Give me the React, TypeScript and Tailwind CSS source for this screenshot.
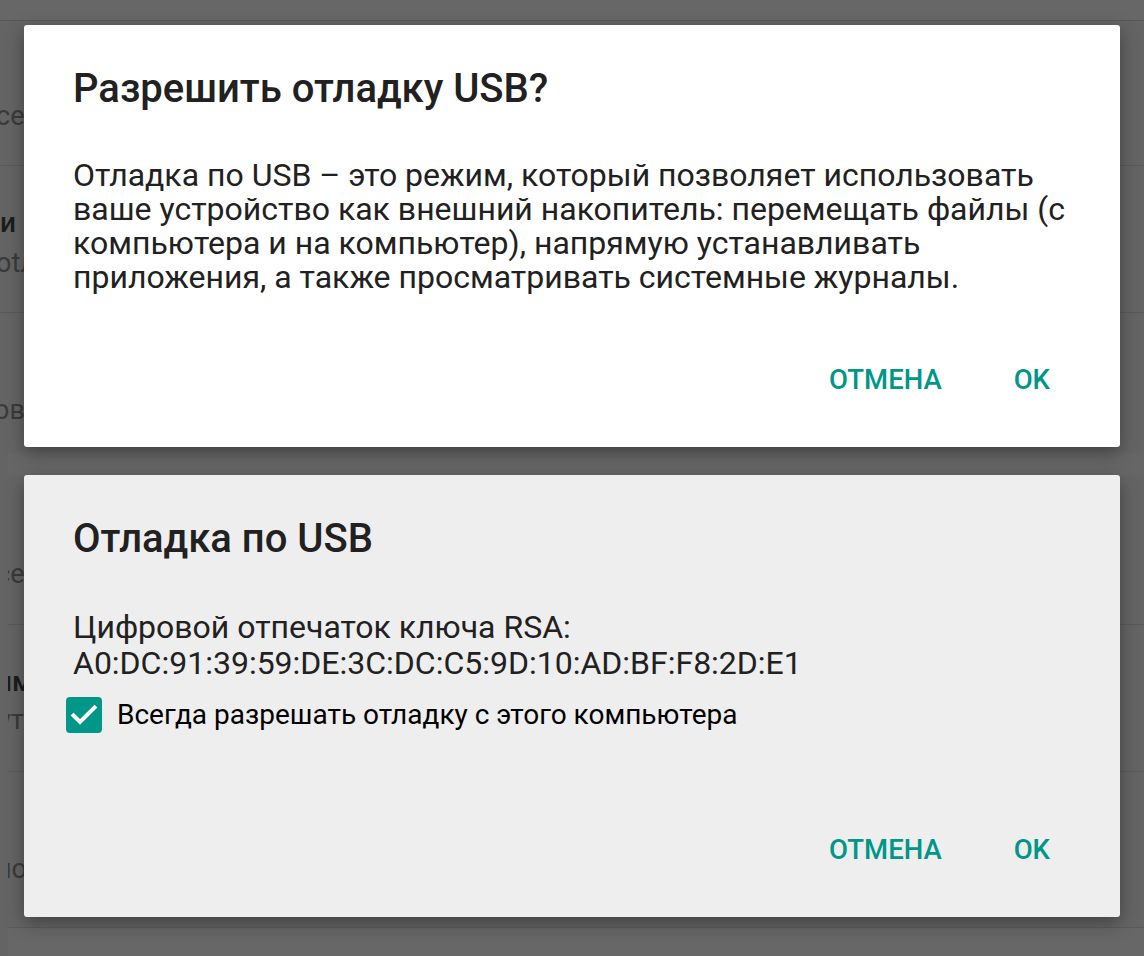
import React from 'react'

function Check() {
  return (
    <div className="w-[36px] h-[36px] rounded-[4px] bg-[#009688] flex items-center justify-center shrink-0">
      <svg width="36" height="36" viewBox="0 0 36 36" fill="none">
        <path d="M7.5 18.5 L14 25 L28.5 10.5" stroke="#fff" strokeWidth="4" strokeLinecap="square" />
      </svg>
    </div>
  )
}

function Buttons() {
  return (
    <div className="mt-auto flex justify-end items-center gap-[72px] pr-[70px] pb-[50px] text-[27.5px] leading-[34px] font-medium text-[#009688]">
      <span>ОТМЕНА</span>
      <span>OK</span>
    </div>
  )
}

const subText = 'text-[27px] leading-[34px] text-[#3a3a3a] whitespace-nowrap'
const titleText = 'text-[28px] leading-[34px] font-medium text-[#1c1c1c] whitespace-nowrap'

export default function App() {
  return (
    <div className="relative w-[1144px] h-[956px] overflow-hidden bg-[#646464]" style={{ fontFamily: 'Roboto, "Noto Sans", sans-serif' }}>
      {/* dimmed settings list behind */}
      <div className="flex flex-col">
        <div className="h-[21px] bg-[#676767] border-b border-[#585858]" />
        <div className="h-[145px] border-b border-[#5a5a5a] overflow-hidden">
          <div className={`pt-[78px] -ml-[4px] ${subText}`}>certificates</div>
        </div>
        <div className="h-[147px] border-b border-[#5a5a5a] overflow-hidden">
          <div className={`pt-[40px] ${titleText}`}>и настройки</div>
          <div className={`pt-[6px] -ml-[4px] ${subText}`}>otладка</div>
        </div>
        <div className="h-[140px] overflow-hidden">
          <div className={`pt-[80px] -ml-[6px] ${subText}`}>овать</div>
        </div>
        <div className="h-[22px] bg-[#666666] ml-[8px]" />
        <div className="ml-[8px] flex flex-col">
          <div className="h-[150px] border-b border-[#5a5a5a] overflow-hidden">
            <div className={`pt-[82px] -ml-[12px] ${subText}`}>сегодня</div>
          </div>
          <div className="h-[147px] border-b border-[#5a5a5a] overflow-hidden">
            <div className={`pt-[40px] -ml-[12px] ${titleText}`}>им</div>
            <div className={`pt-[4px] -ml-[10px] ${subText}`}>yт</div>
          </div>
          <div className="h-[156px] border-b border-[#5a5a5a] overflow-hidden">
            <div className={`pt-[80px] -ml-[12px] ${subText}`}>новое</div>
          </div>
          <div className="h-[30px] bg-[#676767]" />
        </div>
      </div>

      {/* dialogs */}
      <div className="absolute inset-0 flex flex-col gap-[28px] pt-[25px] px-[24px]">
        <div className="h-[422px] flex flex-col rounded-[3px] bg-white shadow-[0_6px_18px_rgba(0,0,0,0.35)]">
          <div className="pl-[49px] pt-[41px] text-[40px] leading-[46px] font-medium text-[#212121]">Разрешить отладку USB?</div>
          <div className="pl-[49px] pr-[40px] mt-[46px] text-[32px] leading-[34px] text-[#212121]">
            Отладка по USB – это режим, который позволяет использовать ваше устройство как внешний накопитель: перемещать файлы (с компьютера и на компьютер), напрямую устанавливать приложения, а также просматривать системные журналы.
          </div>
          <Buttons />
        </div>

        <div className="h-[442px] flex flex-col rounded-[3px] bg-[#eeeeee] shadow-[0_6px_18px_rgba(0,0,0,0.35)]">
          <div className="pl-[49px] pt-[41px] text-[40px] leading-[46px] font-medium text-[#212121]">Отладка по USB</div>
          <div className="pl-[49px] mt-[47px] text-[32px] leading-[36px] text-[#212121]">
            <div>Цифровой отпечаток ключа RSA:</div>
            <div>A0:DC:91:39:59:DE:3C:DC:C5:9D:10:AD:BF:F8:2D:E1</div>
          </div>
          <div className="pl-[42px] mt-[16px] flex items-center gap-[15px]">
            <Check />
            <span className="text-[28px] leading-[34px] text-black">Всегда разрешать отладку с этого компьютера</span>
          </div>
          <Buttons />
        </div>
      </div>
    </div>
  )
}
